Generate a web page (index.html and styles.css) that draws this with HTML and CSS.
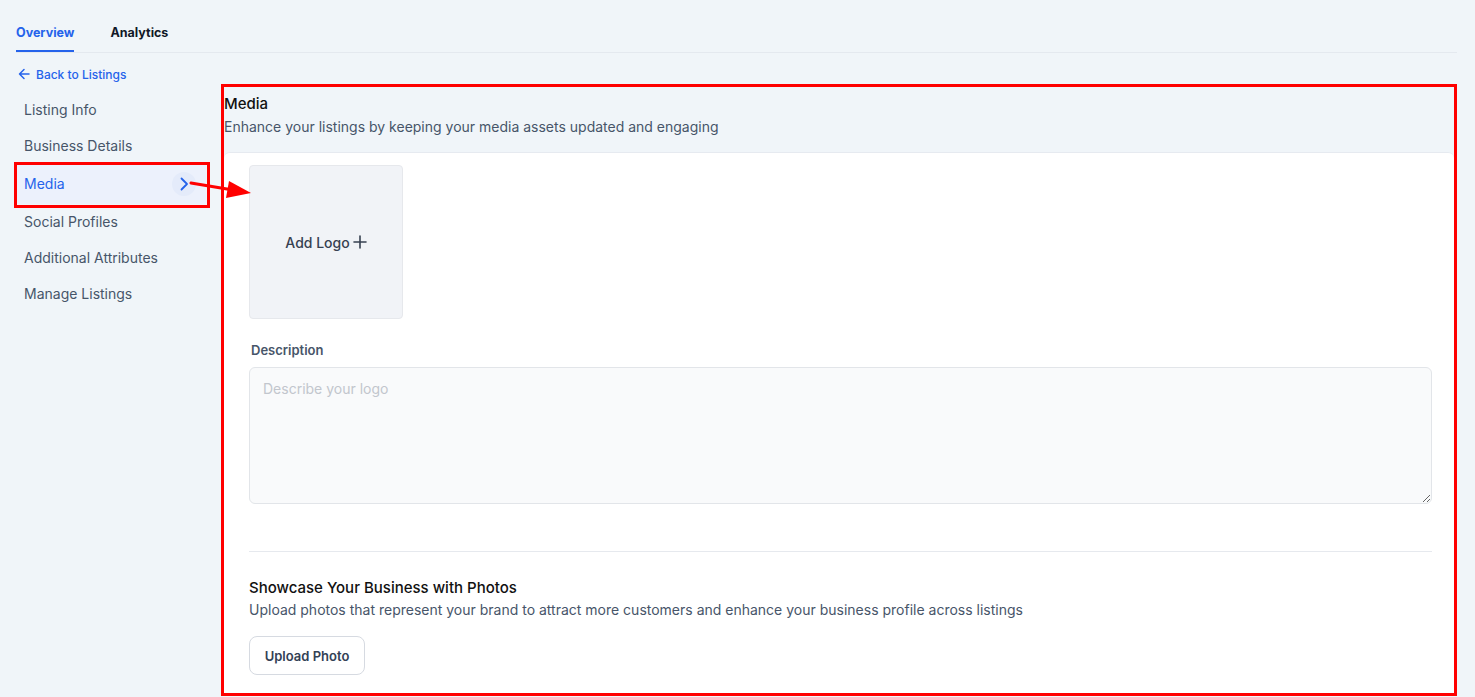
FILE: index.html
```html
<!DOCTYPE html>
<html lang="en">
<head>
  <meta charset="UTF-8">
  <meta name="viewport" content="width=device-width, initial-scale=1.0">
  <title>Listing | Media</title>
  <link rel="stylesheet" href="styles.css">
</head>
<body>
<div class="page">
  <nav class="tabs">
    <a class="tab tab-active" href="#">Overview</a>
    <a class="tab" href="#">Analytics</a>
  </nav>

  <div class="layout">
    <aside class="sidebar">
      <a class="back-link" href="#">
        <svg width="12" height="12" viewBox="0 0 12 12" fill="none" stroke="currentColor" stroke-width="1.5" stroke-linecap="round" stroke-linejoin="round"><path d="M11 6H1.5M6 1.5L1.5 6L6 10.5"/></svg>
        Back to Listings
      </a>
      <ul class="side-nav">
        <li class="side-item">Listing Info</li>
        <li class="side-item">Business Details</li>
        <li class="side-item side-item-active">
          Media
          <span class="chevron">
            <svg width="10" height="14" viewBox="0 0 10 14" fill="none" stroke="currentColor" stroke-width="1.8" stroke-linecap="round" stroke-linejoin="round"><path d="M2.5 1.5L8 7L2.5 12.5"/></svg>
          </span>
          <span class="mark-box"></span>
        </li>
        <li class="side-item">Social Profiles</li>
        <li class="side-item">Additional Attributes</li>
        <li class="side-item">Manage Listings</li>
      </ul>
    </aside>

    <main class="panel">
      <header class="panel-head">
        <h2 class="panel-title">Media</h2>
        <p class="panel-sub">Enhance your listings by keeping your media assets updated and engaging</p>
      </header>

      <section class="card">
        <div class="logo-box">
          Add Logo
          <svg width="14" height="14" viewBox="0 0 14 14" fill="none" stroke="currentColor" stroke-width="1.6" stroke-linecap="round"><path d="M7 1V13M1 7H13"/></svg>
        </div>

        <label class="field-label" for="logo-desc">Description</label>
        <textarea id="logo-desc" class="field-text" placeholder="Describe your logo"></textarea>

        <hr class="divider">

        <h3 class="section-title">Showcase Your Business with Photos</h3>
        <p class="section-sub">Upload photos that represent your brand to attract more customers and enhance your business profile across listings</p>
        <button class="btn-outline" type="button">Upload Photo</button>
      </section>
    </main>
  </div>

  <!-- annotation arrow -->
  <svg class="mark-arrow" width="64" height="22" viewBox="0 0 64 22">
    <path d="M2 6L44 13" stroke="#ff0000" stroke-width="3" stroke-linecap="round"/>
    <path d="M40 4L62 16L37 21Z" fill="#ff0000"/>
  </svg>
</div>
</body>
</html>
```

FILE: styles.css
```css
* {
  box-sizing: border-box;
}

html, body {
  margin: 0;
  padding: 0;
  height: 100%;
  overflow: hidden;
}

body {
  background-color: #f0f5f9;
  font-family: Inter, "Noto Sans", sans-serif;
  color: #111827;
}

.page {
  position: relative;
  padding: 0 18px 0 16px;
}

/* tabs */
.tabs {
  display: flex;
  gap: 36px;
  border-bottom: 1px solid #e4e9ef;
}

.tab {
  padding: 25px 0 9px;
  line-height: 16px;
  font-size: 12.5px;
  font-weight: 700;
  color: #111827;
  text-decoration: none;
  border-bottom: 2px solid transparent;
}

.tab-active {
  color: #2563eb;
  border-bottom-color: #2563eb;
}

/* layout */
.layout {
  display: flex;
  gap: 13px;
  align-items: flex-start;
}

.sidebar {
  width: 192px;
  flex-shrink: 0;
  padding-top: 13px;
}

.back-link {
  display: flex;
  align-items: center;
  gap: 6px;
  padding-left: 2px;
  height: 16px;
  font-size: 12px;
  font-weight: 500;
  color: #2563eb;
  text-decoration: none;
}

.side-nav {
  list-style: none;
  margin: 10px 0 0;
  padding: 0;
}

.side-item {
  position: relative;
  display: flex;
  align-items: center;
  padding: 8px 8px;
  line-height: 20px;
  font-size: 14px;
  color: #475569;
}

.side-item-active {
  padding: 10px 8px;
  margin-right: 2px;
  background-color: #ecf1fc;
  color: #2563eb;
}

.chevron {
  margin: -4px 2px -4px auto;
  width: 24px;
  height: 24px;
  border-radius: 50%;
  background-color: #e4ebfa;
  display: flex;
  align-items: center;
  justify-content: center;
  color: #2563eb;
}

.mark-box {
  position: absolute;
  top: -2px;
  left: -2px;
  right: -4px;
  bottom: -4px;
  border: 3px solid #ff0000;
}

.mark-arrow {
  position: absolute;
  left: 189px;
  top: 177px;
}

/* main panel */
.panel {
  flex: 1;
  margin-top: 31px;
  height: 612px;
  border: 3px solid #ff0000;
  display: flex;
  flex-direction: column;
}

.panel-head {
  padding: 7px 0 15px;
}

.panel-title {
  margin: 0;
  font-size: 15px;
  line-height: 20px;
  font-weight: 500;
  color: #111111;
}

.panel-sub {
  margin: 3px 0 0;
  font-size: 14px;
  line-height: 20px;
  color: #475569;
}

.card {
  flex: 1;
  background-color: #ffffff;
  border-top: 1px solid #e6eaf0;
  border-radius: 6px 6px 0 0;
  padding: 12px 22px 0 25px;
}

.logo-box {
  width: 154px;
  height: 154px;
  background-color: #f1f3f7;
  border: 1px solid #e6e8ec;
  border-radius: 4px;
  display: flex;
  align-items: center;
  justify-content: center;
  gap: 3px;
  font-size: 14px;
  font-weight: 500;
  color: #374151;
}

.field-label {
  display: block;
  margin: 22px 0 8px 2px;
  font-size: 13px;
  line-height: 18px;
  font-weight: 600;
  color: #475569;
}

.field-text {
  display: block;
  width: 100%;
  height: 137px;
  padding: 12px 13px;
  background-color: #f9fafb;
  border: 1px solid #e2e5e9;
  border-radius: 6px;
  font-family: Inter, "Noto Sans", sans-serif;
  font-size: 14px;
  line-height: 18px;
  color: #111827;
}

.field-text::placeholder {
  color: #c2c6cd;
}

.divider {
  margin: 47px 0 0;
  border: 0;
  border-top: 1px solid #e6e9ee;
}

.section-title {
  margin: 26px 0 0;
  font-size: 15px;
  line-height: 20px;
  font-weight: 500;
  color: #111111;
}

.section-sub {
  margin: 2px 0 0;
  font-size: 14px;
  line-height: 20px;
  color: #475569;
}

.btn-outline {
  margin-top: 16px;
  width: 116px;
  height: 39px;
  background-color: #ffffff;
  border: 1px solid #d6dae1;
  border-radius: 8px;
  font-family: Inter, "Noto Sans", sans-serif;
  font-size: 13px;
  font-weight: 600;
  color: #334155;
}
```
